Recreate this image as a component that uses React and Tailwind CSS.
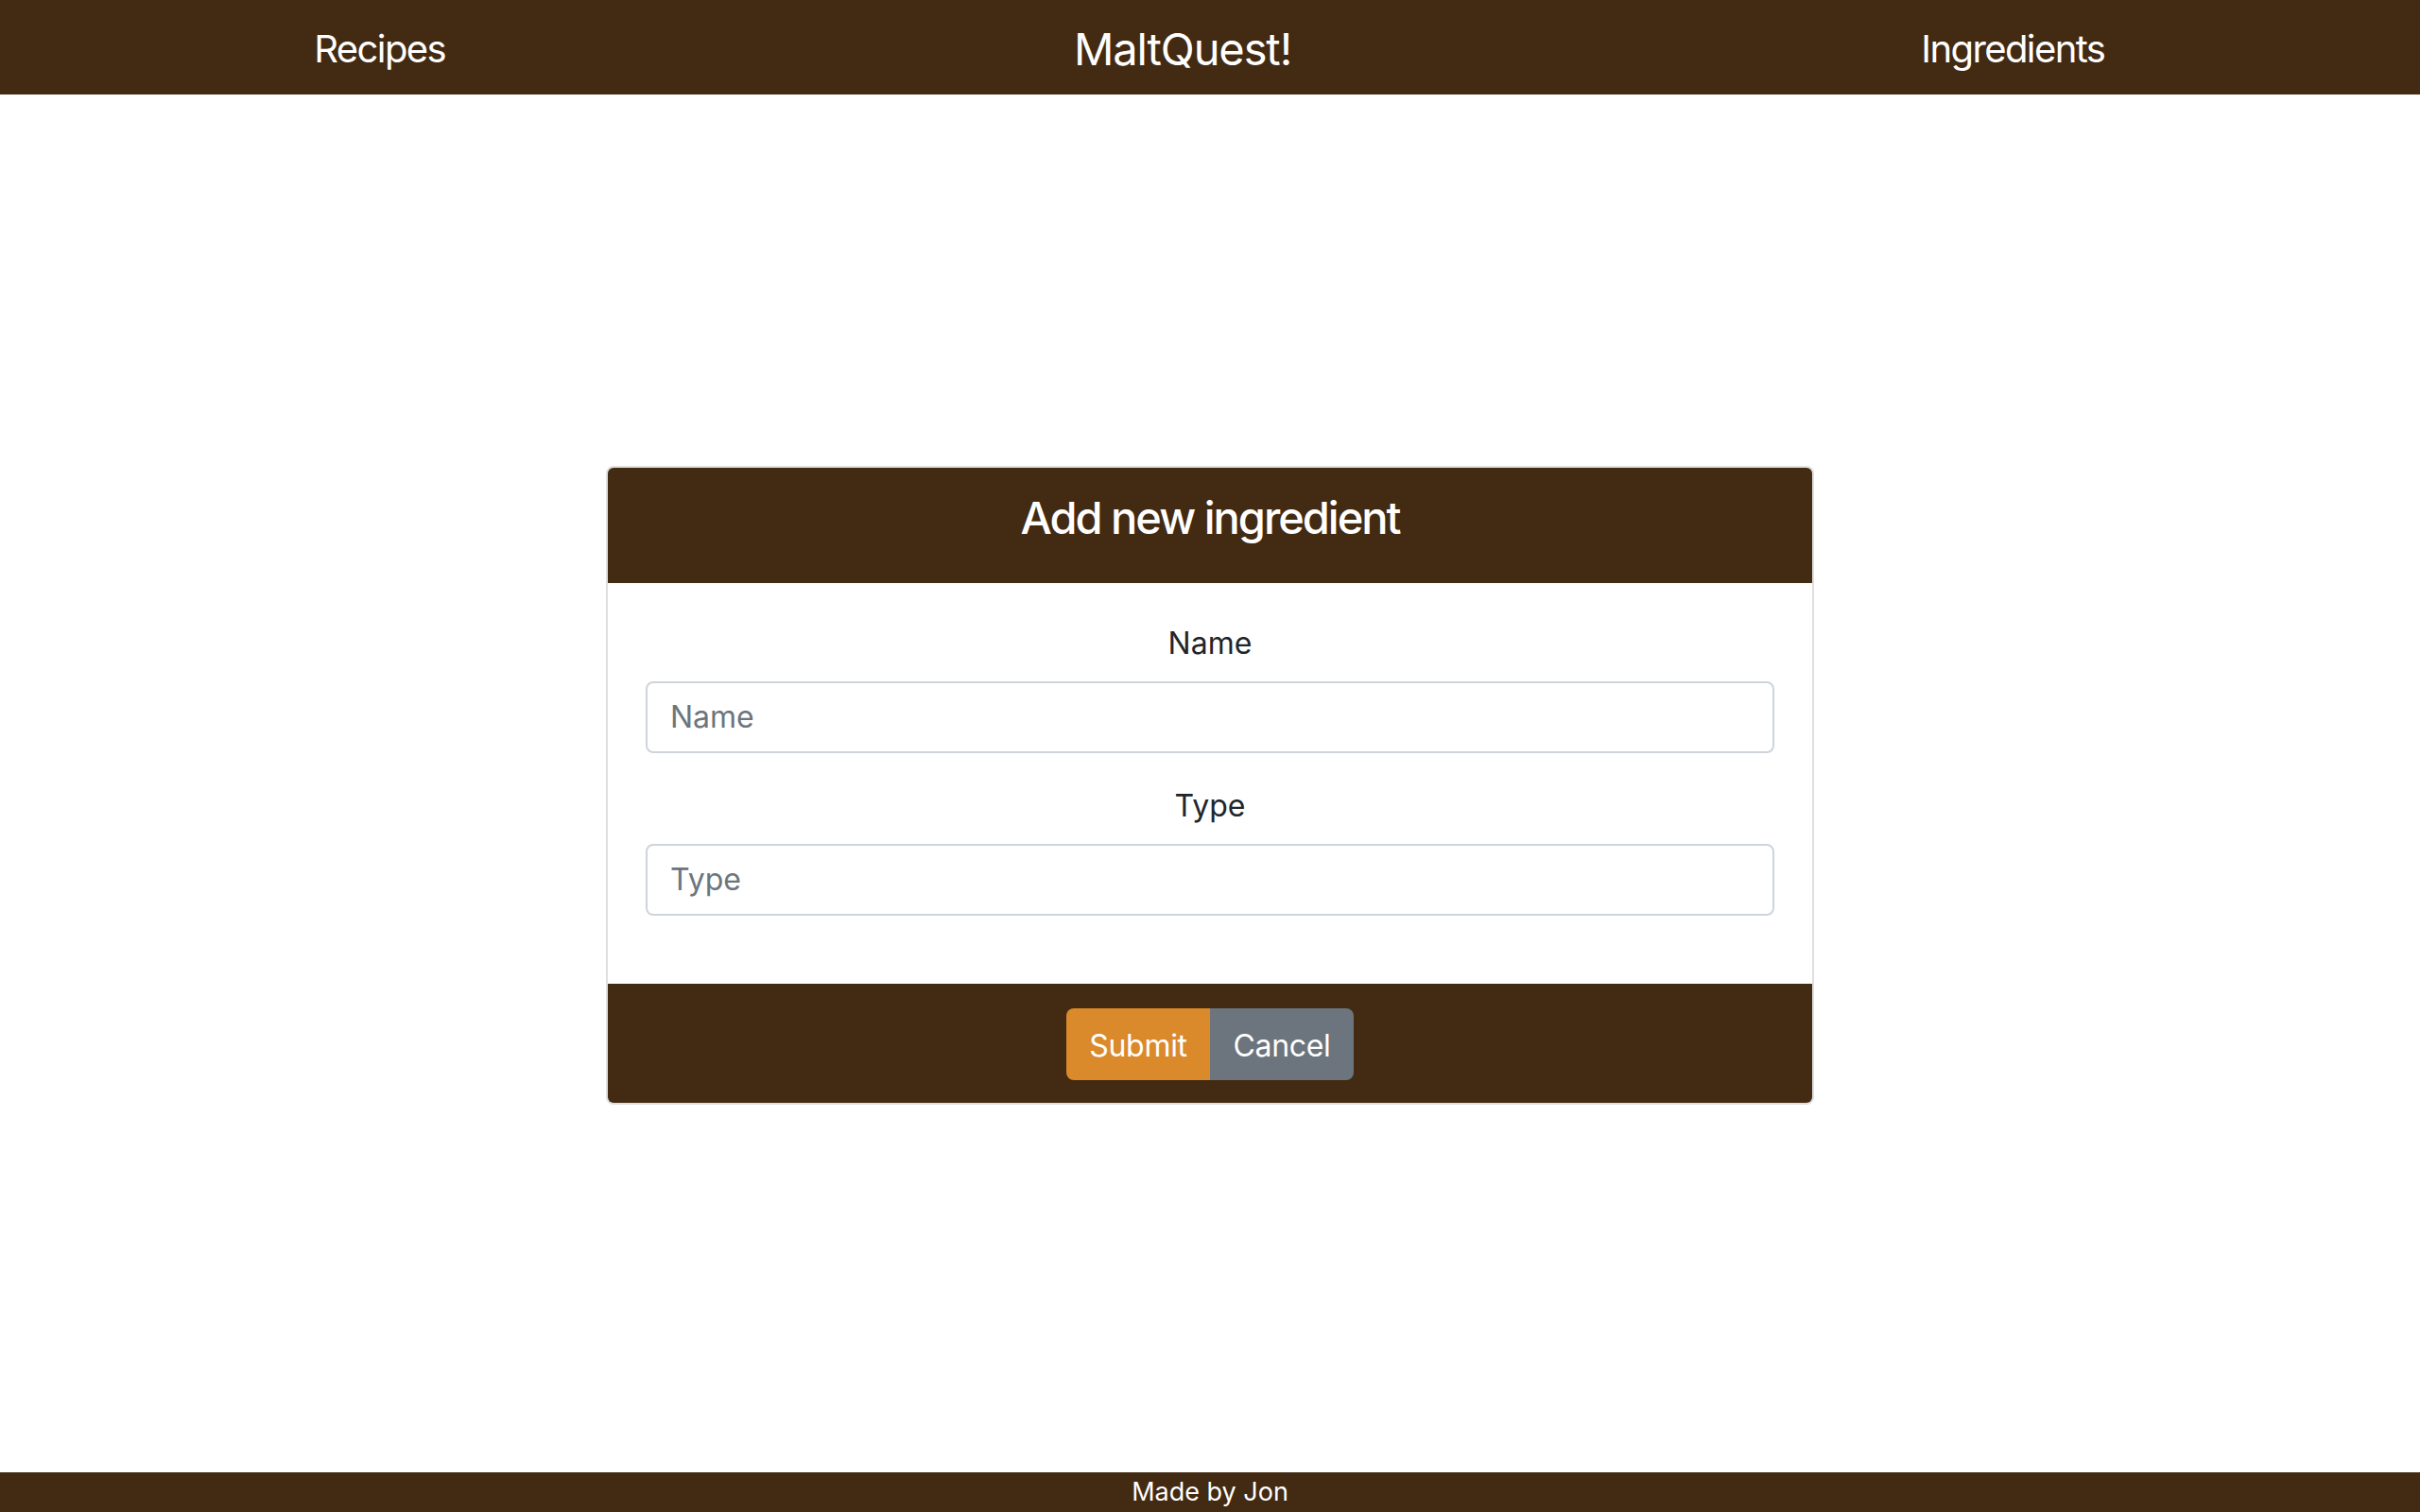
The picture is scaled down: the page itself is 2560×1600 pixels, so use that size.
import React, { useState } from "react";

const App = () => {
  const [formData, setFormData] = useState({ name: "", type: "" });

  const handleChange = (e) => {
    const { name, value } = e.target;
    setFormData((prev) => ({ ...prev, [name]: value }));
  };

  const labelClass = "block text-center text-[32px] leading-[48px] text-[#212529] mb-4";
  const inputClass =
    "w-full h-[76px] px-6 rounded-lg border-2 border-[#ced4da] bg-white text-[32px] text-[#495057] outline-none placeholder:text-[#6c757d]";

  return (
    <div className="min-h-screen flex flex-col bg-white font-[Inter,sans-serif]">
      {/* navbar */}
      <nav className="h-[100px] shrink-0 grid grid-cols-3 items-center bg-[#432a12] text-white">
        <a className="text-center text-[40px] tracking-[-1.6px] pr-[50px] pt-1 cursor-pointer">Recipes</a>
        <a className="text-center text-[47px] tracking-[-1.1px] pr-[58px] pt-1 cursor-pointer">MaltQuest!</a>
        <a className="text-center text-[40px] tracking-[-1.6px] pr-[8px] pt-1 cursor-pointer">Ingredients</a>
      </nav>

      <main className="flex-1 flex items-center justify-center pt-[3px]">
        <div className="w-[1278px] rounded-lg border-2 border-[rgba(0,0,0,0.125)] overflow-hidden">
          <div className="bg-[#432a12] px-10 pt-6 pb-6">
            <h4 className="text-center text-white text-[47px] leading-[58px] tracking-[-2px] font-medium mb-4">
              Add new ingredient
            </h4>
          </div>

          <form className="px-10 pt-10 pb-10 bg-white" onSubmit={(e) => e.preventDefault()}>
            <div className="mb-8">
              <label className={labelClass}>Name</label>
              <input
                type="text"
                name="name"
                value={formData.name}
                onChange={handleChange}
                placeholder="Name"
                className={inputClass}
              />
            </div>
            <div className="mb-8">
              <label className={labelClass}>Type</label>
              <input
                type="text"
                name="type"
                value={formData.type}
                onChange={handleChange}
                placeholder="Type"
                className={inputClass}
              />
            </div>
          </form>

          <div className="bg-[#432a12] pt-[26px] pb-6 flex justify-center">
            <div className="inline-flex">
              <button className="w-[152px] h-[76px] pt-1 rounded-l-lg bg-[#da8a2b] text-white text-[32px] tracking-[-0.3px]">
                Submit
              </button>
              <button className="w-[152px] h-[76px] pt-1 rounded-r-lg bg-[#6c757d] text-white text-[32px] tracking-[-0.3px]">
                Cancel
              </button>
            </div>
          </div>
        </div>
      </main>

      <footer className="h-[42px] shrink-0 flex items-center justify-center bg-[#432a12] text-white text-[27px]">
        Made by Jon
      </footer>
    </div>
  );
};

export default App;
